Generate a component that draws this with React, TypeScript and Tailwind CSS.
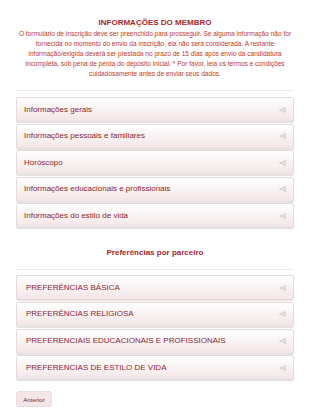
import React from 'react';

const memberSections = [
  'Informações gerais',
  'Informações pessoais e familiares',
  'Horóscopo',
  'Informações educacionais e profissionais',
  'Informações do estilo de vida',
];

const partnerSections = [
  'PREFERÊNCIAS BÁSICA',
  'PREFERÊNCIAS RELIGIOSA',
  'PREFERENCIAIS EDUCACIONAIS E PROFISSIONAIS',
  'PREFERENCIAS DE ESTILO DE VIDA',
];

function Caret() {
  return (
    <svg width="7" height="6" viewBox="0 0 7 6" className="shrink-0">
      <polygon points="6.5,0.5 6.5,5.5 0.5,3" fill="#e6e2e2" stroke="#cfc9c9" strokeWidth="0.8" />
    </svg>
  );
}

function SectionCard({ label, wide }: { label: string; wide?: boolean }) {
  return (
    <div
      className={`flex h-[25px] items-center justify-between rounded-[2px] border border-[#e4dcdc] bg-gradient-to-b from-white to-[#f3e5e6] pr-[7px] text-[8px] text-[#8a1f30] shadow-[0_1px_1px_rgba(0,0,0,0.12)] ${
        wide ? 'pl-[9px]' : 'pl-[7px]'
      }`}
    >
      <span className="leading-none">{label}</span>
      <Caret />
    </div>
  );
}

export default function App() {
  return (
    <div className="min-h-[419px] w-[310px] bg-white px-4 font-['Liberation_Sans',Arial,sans-serif]">
      <h1 className="pt-[18px] text-center text-[8px] font-bold leading-[10px] text-[#a3272c]">
        INFORMAÇÕES DO MEMBRO
      </h1>
      <p className="mx-[-2px] mt-px text-center text-[6.55px] leading-[10px] text-[#c0392b]">
        O formulário de inscrição deve ser preenchido para prosseguir. Se alguma informação não for fornecida no
        momento do envio da inscrição, ela não será considerada. A restante informação/exigida deverá ser prestada no
        prazo de 15 dias após envio da candidatura incompleta, sob pena de perda do depósito inicial. * Por favor, leia
        os termos e condições cuidadosamente antes de enviar seus dados.
      </p>

      <div className="mt-[11px] h-px bg-[#efebeb]" />
      <div className="mt-[6px] flex flex-col gap-[1.6px]">
        {memberSections.map(s => (
          <SectionCard key={s} label={s} />
        ))}
      </div>

      <h2 className="mt-[20px] text-center text-[8px] font-bold leading-[10px] text-[#a3272c]">
        Preferências por parceiro
      </h2>
      <div className="mt-[11px] h-px bg-[#efebeb]" />
      <div className="mt-[5px] flex flex-col gap-[1.6px]">
        {partnerSections.map(s => (
          <SectionCard key={s} label={s} wide />
        ))}
      </div>

      <button className="mt-[11px] flex h-[16px] w-[36px] items-center justify-center rounded-[3px] border border-[#eadcdd] bg-[#f4e6e7] text-[6.2px] text-[#7e1f2c]">
        Anterior
      </button>
    </div>
  );
}
